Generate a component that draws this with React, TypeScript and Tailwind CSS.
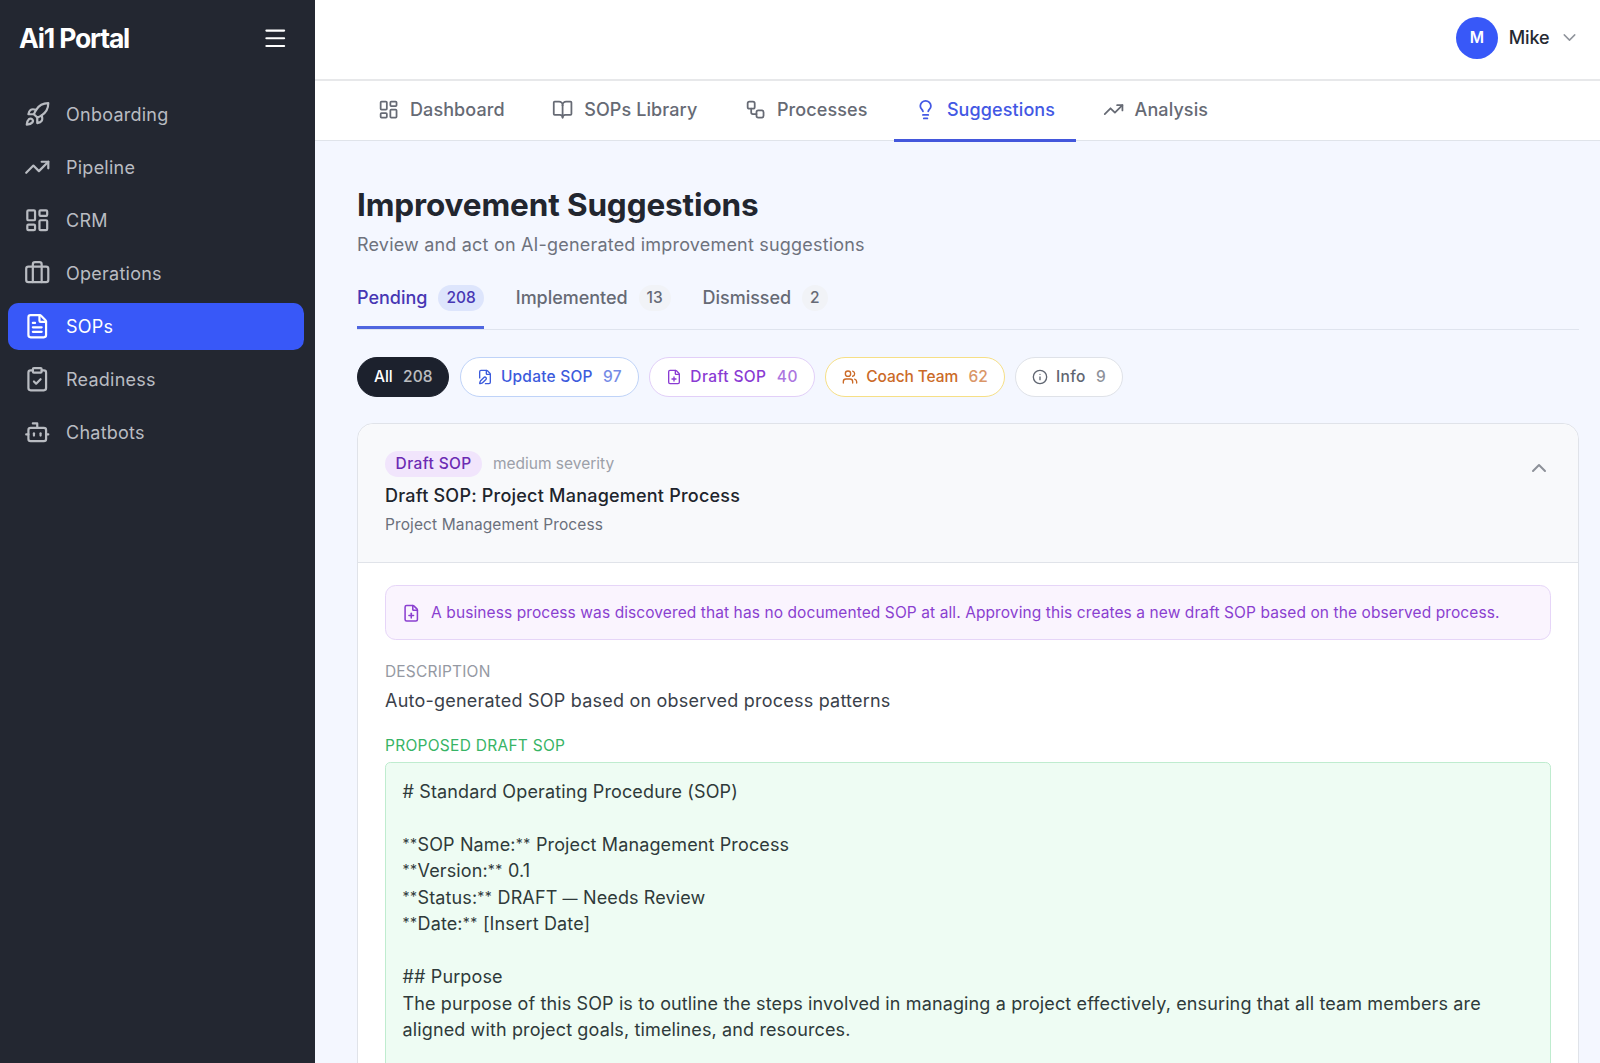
import type { LucideIcon } from 'lucide-react';
import {
  BookOpen,
  Bot,
  Briefcase,
  ChevronDown,
  ChevronUp,
  ClipboardCheck,
  FilePen,
  FilePlus,
  FileText,
  Info,
  LayoutDashboard,
  Lightbulb,
  Menu,
  Rocket,
  TrendingUp,
  Users,
  Workflow,
} from 'lucide-react';

type NavItem = { label: string; icon: LucideIcon; active?: boolean };

const navItems: NavItem[] = [
  { label: 'Onboarding', icon: Rocket },
  { label: 'Pipeline', icon: TrendingUp },
  { label: 'CRM', icon: LayoutDashboard },
  { label: 'Operations', icon: Briefcase },
  { label: 'SOPs', icon: FileText, active: true },
  { label: 'Readiness', icon: ClipboardCheck },
  { label: 'Chatbots', icon: Bot },
];

const tabs: NavItem[] = [
  { label: 'Dashboard', icon: LayoutDashboard },
  { label: 'SOPs Library', icon: BookOpen },
  { label: 'Processes', icon: Workflow },
  { label: 'Suggestions', icon: Lightbulb, active: true },
  { label: 'Analysis', icon: TrendingUp },
];

const statuses = [
  { label: 'Pending', count: 208, active: true },
  { label: 'Implemented', count: 13 },
  { label: 'Dismissed', count: 2 },
];

const filters: { label: string; count: number; icon?: LucideIcon; className: string }[] = [
  { label: 'All', count: 208, className: 'bg-[#1c212d] border-[#1c212d] text-white' },
  {
    label: 'Update SOP',
    count: 97,
    icon: FilePen,
    className: 'bg-white border-[#bfd3f8] text-[#3c5bdc] tracking-[0.22px]',
  },
  {
    label: 'Draft SOP',
    count: 40,
    icon: FilePlus,
    className: 'bg-white border-[#e2cff8] text-[#8a3bd3] tracking-[0.4px]',
  },
  {
    label: 'Coach Team',
    count: 62,
    icon: Users,
    className: 'bg-white border-[#f6df86] text-[#cb6a27] tracking-[-0.1px]',
  },
  {
    label: 'Info',
    count: 9,
    icon: Info,
    className: 'bg-white border-[#dfe2e8] text-[#5f6571] tracking-[0.3px]',
  },
];

const draftText = `# Standard Operating Procedure (SOP)

**SOP Name:** Project Management Process
**Version:** 0.1
**Status:** DRAFT — Needs Review
**Date:** [Insert Date]

## Purpose
The purpose of this SOP is to outline the steps involved in managing a project effectively, ensuring that all team members are aligned with project goals, timelines, and resources.`;

function Sidebar() {
  return (
    <aside className="w-[315px] shrink-0 bg-[#232731] text-[#b9bcc2]">
      <div className="flex h-[76px] items-center justify-between pl-[19px] pr-[27px]">
        <span className="pt-0.5 text-[26.5px] font-bold tracking-[-1.15px] text-white">
          Ai1 Portal
        </span>
        <Menu size={26.5} className="text-white" />
      </div>
      <nav className="flex flex-col gap-[5.3px] pl-2 pr-[11px] pt-[14.8px]">
        {navItems.map(({ label, icon: Icon, active }) => (
          <a
            key={label}
            className={`flex h-[47.7px] items-center gap-[15.5px] rounded-[10.6px] px-4 text-[18px] tracking-[0.25px] ${
              active ? 'bg-[#3858f8] text-white' : ''
            }`}
          >
            <Icon size={26.5} />
            {label}
          </a>
        ))}
      </nav>
    </aside>
  );
}

function TopBar() {
  return (
    <header className="flex h-[81px] shrink-0 items-center justify-end border-b-2 border-[#e7e8ea] bg-white pb-[3.5px] pr-5">
      <div className="flex size-[42.5px] items-center justify-center rounded-full bg-[#3858f8] text-[15.5px] font-semibold text-white">
        M
      </div>
      <span className="ml-[10.6px] pb-px text-[18px] font-medium tracking-[-0.1px] text-[#252932]">
        Mike
      </span>
      <ChevronDown size={21} strokeWidth={1.7} className="ml-[9.5px] text-[#90949c]" />
    </header>
  );
}

function Tabs() {
  return (
    <div className="flex h-[60px] shrink-0 gap-[5.3px] border-b border-[#e0e4ea] bg-white pl-[42px]">
      {tabs.map(({ label, icon: Icon, active }) => (
        <a
          key={label}
          className={`flex h-[60.5px] items-center gap-[10.6px] border-b-3 px-[21.2px] pb-px text-[18px] font-medium tracking-[0.1px] ${
            active ? 'border-[#4357dc] text-[#4358e4]' : 'border-transparent text-[#666a74]'
          }`}
        >
          <Icon size={21.2} />
          {label}
        </a>
      ))}
    </div>
  );
}

// Asterisks and dashes are set a bit smaller than the rest of the draft
function DraftBody({ text }: { text: string }) {
  return (
    <div className="mt-[5px] whitespace-pre-wrap rounded-[5.3px] border border-[#bfeccf] bg-[#eefcf3] pb-16 pl-[16.5px] pr-4 pt-[16.3px] text-[18px] leading-[26.47px] tracking-[0.13px] text-[#2f3a3a]">
      {text.split(/(\*\*|—)/).map((part, i) => {
        if (part === '**') {
          return (
            <span key={i} className="align-[2px] text-[14px] leading-none tracking-[0.5px]">
              {part}
            </span>
          );
        }
        if (part === '—') {
          return (
            <span key={i} className="text-[15px] leading-none">
              {part}
            </span>
          );
        }
        return part;
      })}
    </div>
  );
}

function SuggestionCard() {
  return (
    <section className="mt-[26px] rounded-t-2xl border border-[#e0e3e9] bg-white">
      <div className="flex items-start justify-between rounded-t-2xl border-b border-[#e0e3e9] bg-[#f8f9fb] pb-[26.5px] pl-[27px] pr-[27px] pt-[27px]">
        <div>
          <div className="flex items-center gap-[10.6px] text-[15.5px]">
            <span className="flex h-[26px] items-center rounded-full bg-[#f1e5fc] px-[10.6px] font-medium tracking-[0.4px] text-[#6c2bb3]">
              Draft SOP
            </span>
            <span className="text-[#9ca0a9]">medium severity</span>
          </div>
          <h3 className="mt-[5px] text-[18px] font-medium leading-[27px] tracking-[0.22px] text-[#20242c]">
            Draft SOP: Project Management Process
          </h3>
          <p className="mt-[4.5px] text-[15.5px] leading-[22px] tracking-[0.11px] text-[#6b707b]">
            Project Management Process
          </p>
        </div>
        <ChevronUp size={24} className="mt-[5px] text-[#8d9199]" />
      </div>

      <div className="px-[27px] pt-[21.5px]">
        <div className="flex h-[55.5px] items-center gap-[10.6px] rounded-[10.6px] border border-[#e6d5f8] bg-[#faf4fe] px-4 text-[15.5px] tracking-[0.09px] text-[#8a3fd0]">
          <FilePlus size={18.5} className="mt-0.5 shrink-0" />
          A business process was discovered that has no documented SOP at all. Approving this creates
          a new draft SOP based on the observed process.
        </div>

        <h4 className="mt-[21px] text-[15.5px] leading-[22px] tracking-[0.18px] text-[#9599a3]">
          DESCRIPTION
        </h4>
        <p className="mt-[5px] text-[18px] leading-[26px] tracking-[0.22px] text-[#3a3f4a]">
          Auto-generated SOP based on observed process patterns
        </p>

        <h4 className="mt-[20.5px] text-[15.5px] leading-[22px] tracking-[0.27px] text-[#37b466]">
          PROPOSED DRAFT SOP
        </h4>
        <DraftBody text={draftText} />
      </div>
    </section>
  );
}

function App() {
  return (
    <div className="flex h-screen overflow-hidden bg-[#f4f7ff] font-['Inter',sans-serif]">
      <Sidebar />
      <div className="flex min-w-0 flex-1 flex-col">
        <TopBar />
        <Tabs />
        <main className="min-h-0 flex-1 overflow-hidden pl-[42px] pr-[21px] pt-[44px]">
          <h1 className="text-[31.5px] font-bold leading-[40px] tracking-[-0.13px] text-[#22262f]">
            Improvement Suggestions
          </h1>
          <p className="mt-[6px] text-[18px] leading-[28px] tracking-[0.19px] text-[#6e727d]">
            Review and act on AI-generated improvement suggestions
          </p>

          {/* Status tabs */}
          <div className="mt-[25px] flex gap-8 border-b border-[#dfe4ee]">
            {statuses.map(({ label, count, active }) => (
              <div
                key={label}
                className={`flex items-center gap-[11px] border-b-3 pb-[15px] text-[18px] font-medium ${
                  active
                    ? 'border-[#4f66e0] text-[#4737b4]'
                    : 'border-transparent tracking-[-0.04px] text-[#666a75]'
                }`}
              >
                {label}
                <span
                  className={`flex h-[26px] items-center rounded-full px-2 text-[15.5px] ${
                    active ? 'bg-[#dde5fc]' : 'bg-[#f1f3f7]'
                  }`}
                >
                  {count}
                </span>
              </div>
            ))}
          </div>

          {/* Type filters */}
          <div className="mt-[27px] flex gap-[10.7px]">
            {filters.map(({ label, count, icon: Icon, className }) => (
              <button
                key={label}
                className={`flex h-10 items-center rounded-full border px-[15.9px] text-[15.5px] font-medium ${className}`}
              >
                {Icon && <Icon size={16} className="mr-[8px]" />}
                {label}
                <span className="ml-[10.4px] opacity-70">{count}</span>
              </button>
            ))}
          </div>

          <SuggestionCard />
        </main>
      </div>
    </div>
  );
}

export default App;
